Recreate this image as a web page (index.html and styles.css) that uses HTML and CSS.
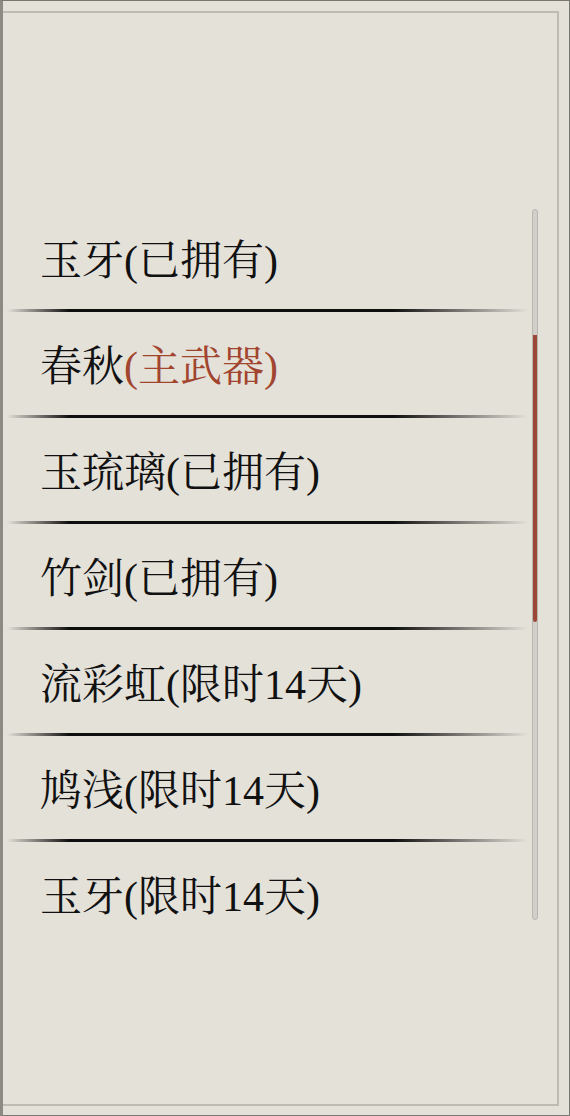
FILE: index.html
```html
<!DOCTYPE html>
<html lang="zh-CN">
<head>
  <meta charset="UTF-8" />
  <meta name="viewport" content="width=device-width, initial-scale=1.0" />
  <title>武器列表</title>
  <link rel="stylesheet" href="styles.css">
</head>
<body>
  <div class="frame">
    <div class="panel">
      <div class="list-wrap">
        <ul class="weapon-list">
          <li class="item">玉牙(已拥有)</li>
          <li class="item">春秋<span class="main">(主武器)</span></li>
          <li class="item">玉琉璃(已拥有)</li>
          <li class="item">竹剑(已拥有)</li>
          <li class="item">流彩虹(限时14天)</li>
          <li class="item">鸠浅(限时14天)</li>
          <li class="item">玉牙(限时14天)</li>
        </ul>
        <div class="scrollbar">
          <div class="thumb"></div>
        </div>
      </div>
    </div>
  </div>
</body>
</html>
```

FILE: styles.css
```css
html, body {
  margin: 0;
  padding: 0;
  background: #e4e1d9;
}
body {
  width: 570px;
  height: 1116px;
  overflow: hidden;
  font-family: "Liberation Serif", "Noto Serif CJK SC", "Noto Sans CJK SC", serif;
  color: #111;
}
.frame {
  box-sizing: border-box;
  width: 570px;
  height: 1116px;
  border: 1px solid #77766f;
  border-left: 3px solid #8c8a83;
  padding: 10px 10px 9px 0;
}
.panel {
  box-sizing: border-box;
  height: 100%;
  border: 2px solid #bebbb3;
  border-left: none;
  padding-top: 192px;
}
.list-wrap {
  position: relative;
  padding-left: 4px;
}
.weapon-list {
  list-style: none;
  margin: 0;
  padding: 0;
  width: 521px;
}
.item {
  position: relative;
  height: 100px;
  line-height: 100px;
  padding: 6px 0 0 33px;
  font-size: 42px;
  white-space: nowrap;
}
.item::after {
  content: "";
  position: absolute;
  left: 0;
  right: 0;
  bottom: -1px;
  height: 3px;
  background: linear-gradient(to right, rgba(17, 17, 17, 0), #0e0e0e 12%, #0e0e0e 74%, rgba(17, 17, 17, 0));
}
.item:last-child::after {
  display: none;
}
.main {
  color: #a2452f;
}
.scrollbar {
  position: absolute;
  left: 529px;
  top: 4px;
  width: 4px;
  height: 709px;
  border: 1px solid #b9b6b1;
  border-radius: 3px;
  background: #d2cfcb;
}
.thumb {
  margin-top: 125px;
  height: 287px;
  background: #9b4636;
  border-radius: 0 0 2px 2px;
}
```
